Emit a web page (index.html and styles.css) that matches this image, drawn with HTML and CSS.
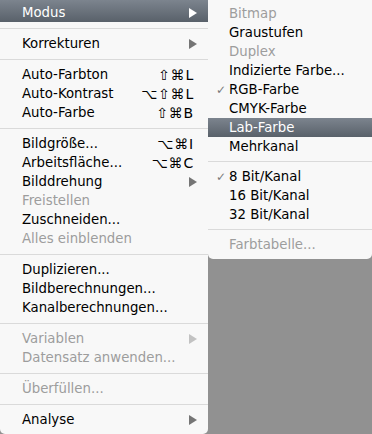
FILE: index.html
```html
<!DOCTYPE html>
<html lang="de">
<head>
<meta charset="utf-8">
<title>Bild-Menü</title>
<link rel="stylesheet" href="styles.css">
</head>
<body>
<div class="screen">
  <div class="menu main">
    <div class="item first active"><span class="label">Modus</span><svg class="arrow" viewBox="0 0 8 10" width="8" height="10"><polygon points="0,0 8,5 0,10"/></svg></div>
    <div class="sep"></div>
    <div class="item"><span class="label">Korrekturen</span><svg class="arrow" viewBox="0 0 8 10" width="8" height="10"><polygon points="0,0 8,5 0,10"/></svg></div>
    <div class="sep"></div>
    <div class="item"><span class="label">Auto-Farbton</span><span class="key">⇧⌘L</span></div>
    <div class="item"><span class="label">Auto-Kontrast</span><span class="key">⌥⇧⌘L</span></div>
    <div class="item"><span class="label">Auto-Farbe</span><span class="key">⇧⌘B</span></div>
    <div class="sep"></div>
    <div class="item"><span class="label">Bildgröße...</span><span class="key">⌥⌘I</span></div>
    <div class="item"><span class="label">Arbeitsfläche...</span><span class="key">⌥⌘C</span></div>
    <div class="item"><span class="label">Bilddrehung</span><svg class="arrow" viewBox="0 0 8 10" width="8" height="10"><polygon points="0,0 8,5 0,10"/></svg></div>
    <div class="item disabled"><span class="label">Freistellen</span></div>
    <div class="item"><span class="label">Zuschneiden...</span></div>
    <div class="item disabled"><span class="label">Alles einblenden</span></div>
    <div class="sep"></div>
    <div class="item"><span class="label">Duplizieren...</span></div>
    <div class="item"><span class="label">Bildberechnungen...</span></div>
    <div class="item"><span class="label">Kanalberechnungen...</span></div>
    <div class="sep"></div>
    <div class="item disabled"><span class="label">Variablen</span><svg class="arrow" viewBox="0 0 8 10" width="8" height="10"><polygon points="0,0 8,5 0,10"/></svg></div>
    <div class="item disabled"><span class="label">Datensatz anwenden...</span></div>
    <div class="sep"></div>
    <div class="item disabled"><span class="label">Überfüllen...</span></div>
    <div class="sep"></div>
    <div class="item"><span class="label">Analyse</span><svg class="arrow" viewBox="0 0 8 10" width="8" height="10"><polygon points="0,0 8,5 0,10"/></svg></div>
  </div>
  <div class="menu sub">
    <div class="item disabled"><span class="check"></span><span class="label">Bitmap</span></div>
    <div class="item"><span class="check"></span><span class="label">Graustufen</span></div>
    <div class="item disabled"><span class="check"></span><span class="label">Duplex</span></div>
    <div class="item"><span class="check"></span><span class="label">Indizierte Farbe...</span></div>
    <div class="item"><span class="check">✓</span><span class="label">RGB-Farbe</span></div>
    <div class="item"><span class="check"></span><span class="label">CMYK-Farbe</span></div>
    <div class="item active"><span class="check"></span><span class="label">Lab-Farbe</span></div>
    <div class="item"><span class="check"></span><span class="label">Mehrkanal</span></div>
    <div class="sep"></div>
    <div class="item"><span class="check">✓</span><span class="label">8 Bit/Kanal</span></div>
    <div class="item"><span class="check"></span><span class="label">16 Bit/Kanal</span></div>
    <div class="item"><span class="check"></span><span class="label">32 Bit/Kanal</span></div>
    <div class="sep"></div>
    <div class="item disabled"><span class="check"></span><span class="label">Farbtabelle...</span></div>
  </div>
</div>
</body>
</html>
```
FILE: styles.css
```css
* { box-sizing: border-box; }
html, body { margin: 0; padding: 0; }
body {
  background: #919191;
  font-family: "DejaVu Sans", "Liberation Sans", sans-serif;
  font-size: 13.3px;
  color: #000;
}
.screen {
  display: flex;
  align-items: flex-start;
  width: 372px;
  height: 434px;
  overflow: hidden;
}
.menu {
  background: #f8f8f8;
  display: flex;
  flex-direction: column;
  border-radius: 0 0 5px 5px;
}
.main {
  width: 208px;
  height: 434px;
  padding-bottom: 5px;
}
.sub {
  width: 164px;
  padding: 4px 0 5px;
}
.item {
  height: 19px;
  display: flex;
  align-items: center;
  padding: 0 15px 0 22px;
  white-space: nowrap;
}
.item.first {
  height: 22px;
  padding-top: 3px;
}
.label { flex: 1; }
.key {
  font-size: 14px;
  letter-spacing: 0.8px;
  margin-right: -1px;
}
.arrow {
  fill: #757575;
  margin-right: -4px;
}
.item.disabled { color: #9d9d9d; }
.item.disabled .arrow { fill: #c2c2c2; }
.item.active {
  background: linear-gradient(#7c848e, #59616a);
  color: #fff;
}
.item.active .arrow { fill: #fff; }
.sep {
  height: 12px;
  display: flex;
  align-items: center;
}
.sep::before {
  content: "";
  flex: 1;
  height: 1px;
  background: #dadada;
}
.sub .sep { height: 11px; }
.sub .item {
  padding: 0;
  display: grid;
  grid-template-columns: 21px 1fr;
}
.check {
  color: #7a7a7a;
  font-size: 12px;
  text-align: right;
  padding-right: 3px;
}
```
